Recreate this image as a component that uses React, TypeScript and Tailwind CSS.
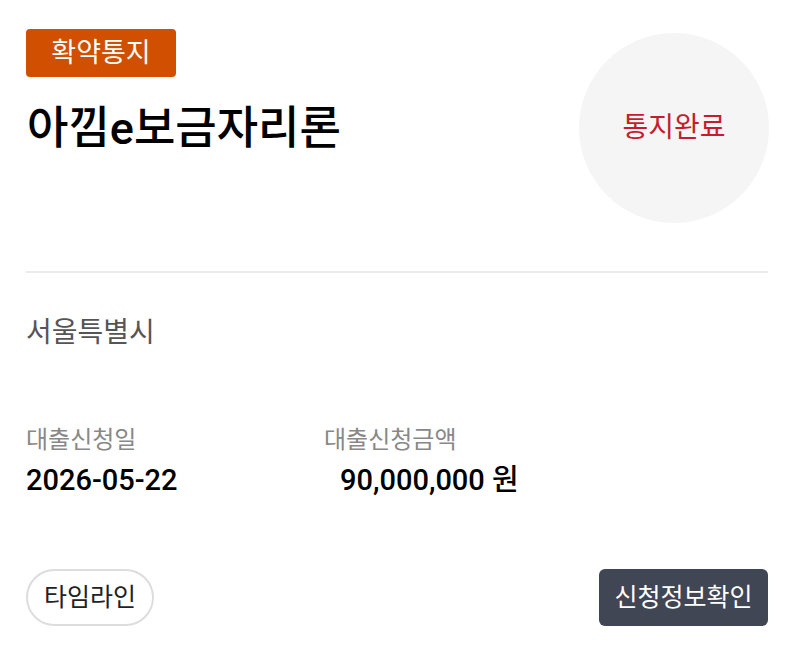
export default function App() {
  return (
    <div
      className="w-[794px] h-[651px] bg-white px-[26px] pt-[29px] text-black"
      style={{ fontFamily: 'Roboto, "Noto Sans CJK KR", "Noto Sans", sans-serif' }}
    >
      {/* Header */}
      <div className="flex items-start justify-between">
        <div className="flex flex-col">
          <div className="w-[150px] h-[48px] flex items-center justify-center rounded-[4px] bg-[#d14f00] text-white text-[27px] leading-none">
            확약통지
          </div>
          <h1 className="mt-[28px] ml-[1px] text-[45px] leading-[48px] font-medium">
            아낌e보금자리론
          </h1>
        </div>
        <div className="mt-[4px] mr-[-1px] w-[190px] h-[190px] rounded-full bg-[#f5f5f5] flex items-center justify-center">
          <span className="text-[28px] text-[#c41e2e] leading-none">통지완료</span>
        </div>
      </div>

      <div className="mt-[48px] h-[2px] bg-[#ececec]" />

      {/* Region */}
      <div className="mt-[42px] text-[28px] leading-[36px] text-[#555555]">서울특별시</div>

      {/* Info */}
      <div className="mt-[74px] flex">
        <div className="w-[298px] flex flex-col">
          <span className="text-[24px] leading-[30px] text-[#888888]">대출신청일</span>
          <span className="mt-[8px] text-[29px] leading-[34px] font-medium">2026-05-22</span>
        </div>
        <div className="flex flex-col">
          <span className="text-[24px] leading-[30px] text-[#888888]">대출신청금액</span>
          <span className="mt-[8px] ml-[16px] text-[29px] leading-[34px] font-medium">90,000,000 원</span>
        </div>
      </div>

      {/* Actions */}
      <div className="mt-[72px] flex items-center justify-between">
        <button className="w-[128px] h-[57px] rounded-full border-2 border-[#dddddd] bg-white text-[25px] text-[#222222]">
          타임라인
        </button>
        <button className="w-[169px] h-[57px] rounded-[6px] bg-[#404654] text-white text-[25px]">
          신청정보확인
        </button>
      </div>
    </div>
  )
}
